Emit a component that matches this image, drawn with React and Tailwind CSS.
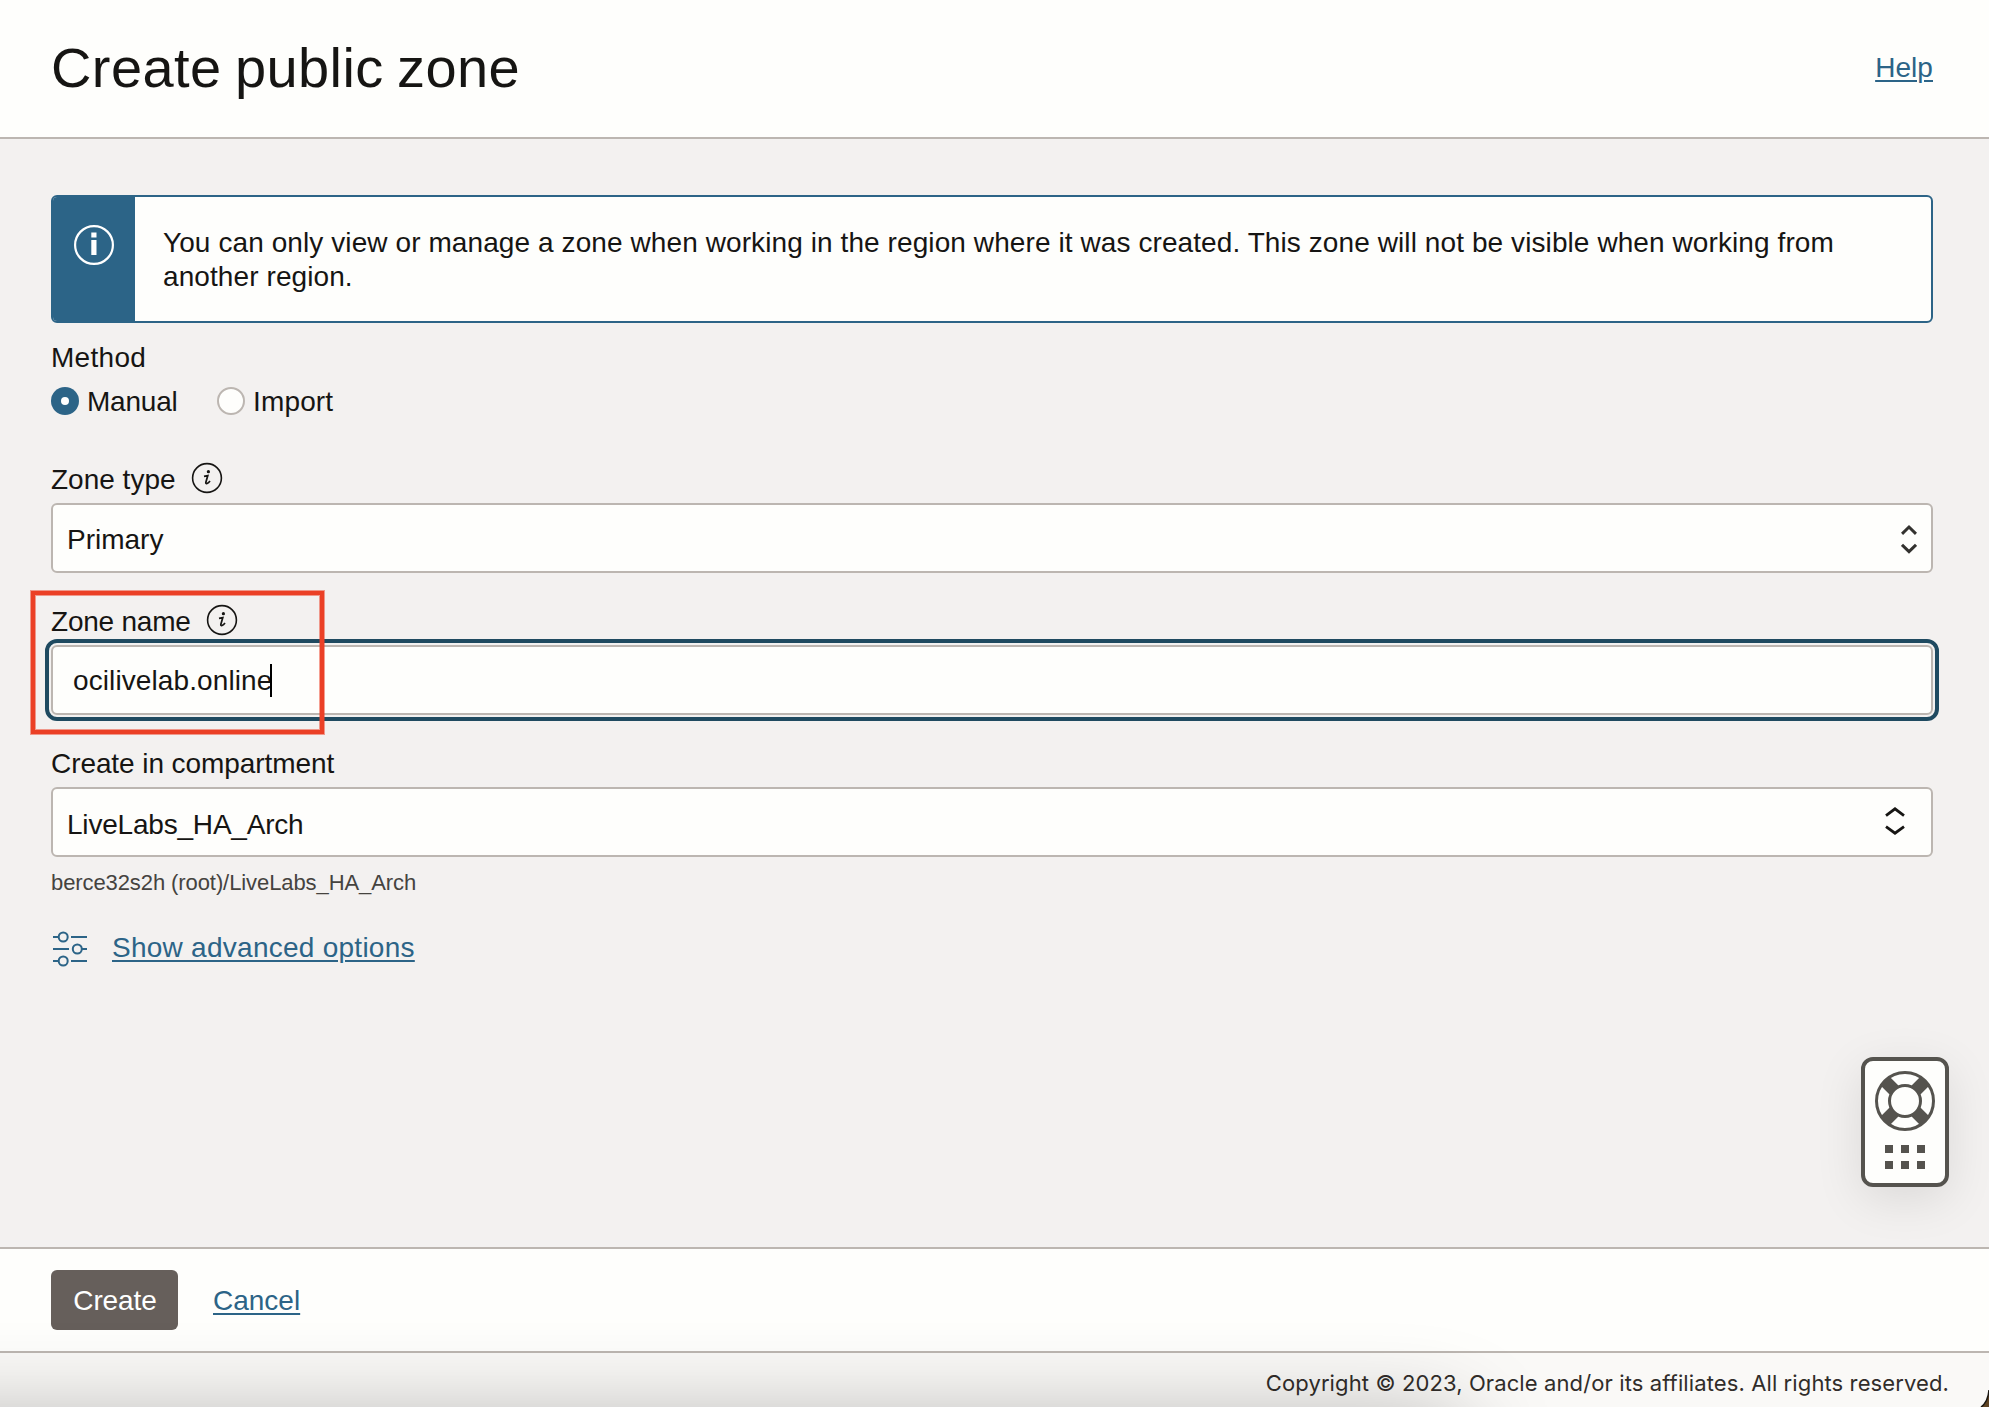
import React from "react";

function InfoCircle() {
  return (
    <svg width="32" height="32" viewBox="0 0 32 32" fill="none" className="shrink-0">
      <circle cx="16" cy="16" r="14.4" stroke="#161513" strokeWidth="1.6" />
      <circle cx="17.4" cy="9.7" r="1.6" fill="#161513" />
      <path d="M13 14.3 L16.8 13.6 L14.8 20.4 Q14.6 22 16 21.5 Q17.6 20.8 19 19" stroke="#161513" strokeWidth="1.7" />
    </svg>
  );
}

function Label({ children, info, className }) {
  return (
    <div className={"flex h-[34px] items-center leading-[34px] " + (className || "")}>
      <span>{children}</span>
      {info && (
        <span className="-mt-1 ml-[15px]">
          <InfoCircle />
        </span>
      )}
    </div>
  );
}

const box =
  "flex h-[70px] items-center rounded-[6px] border-2 border-[#bcb6b1] bg-[#fefefc] leading-[34px]";

function SupportWidget() {
  return (
    <div className="absolute top-[1057px] left-[1861px] flex h-[130px] w-[88px] flex-col items-center rounded-[12px] border-4 border-[#55534e] bg-[#fefefc] pt-[10px] shadow-[0_12px_48px_rgba(0,0,0,0.10)]">
      <svg width="60" height="60" viewBox="0 0 60 60" fill="none">
        <circle cx="30" cy="30" r="28.5" stroke="#55534e" strokeWidth="3" />
        <circle cx="30" cy="30" r="15.5" stroke="#55534e" strokeWidth="3" />
        <g stroke="#55534e" strokeWidth="12.5">
          <path d="M10.5 10.5 L19 19" />
          <path d="M49.5 10.5 L41 19" />
          <path d="M10.5 49.5 L19 41" />
          <path d="M49.5 49.5 L41 41" />
        </g>
      </svg>
      <div className="mt-[14px] grid grid-cols-3 gap-2">
        {[0, 1, 2, 3, 4, 5].map((n) => (
          <span key={n} className="size-2 bg-[#55534e]" />
        ))}
      </div>
    </div>
  );
}

export default function App() {
  return (
    <div className="relative flex h-[1407px] w-[1989px] flex-col overflow-hidden bg-[#f3f1f0] font-['Liberation_Sans',Arial,sans-serif] text-[28px] text-[#161513]">
      <header className="flex h-[139px] shrink-0 items-start justify-between border-b-2 border-[#bcb6b1] bg-[#fefefc] pr-[56px] pl-[51px]">
        <h1 className="mt-[36px] text-[56px] leading-[64px] tracking-[0.4px] [word-spacing:-2.5px]">Create public zone</h1>
        <a className="mt-[51px] leading-[34px] tracking-[0.07px] text-[#2c6487] underline decoration-2 underline-offset-[3px]">Help</a>
      </header>

      <main className="flex-1 pr-[56px] pl-[51px]">
        <div className="mt-[56px] flex h-[128px] overflow-hidden rounded-[6px] border-2 border-[#2c6487] bg-[#fefefc]">
          <div className="flex w-[82px] shrink-0 justify-center bg-[#2c6487] pt-7">
            <svg width="40" height="40" viewBox="0 0 40 40" fill="none">
              <circle cx="20" cy="20" r="18.9" stroke="#fff" strokeWidth="2.2" />
              <path d="M17.3 7.5h5.2v5h-5.2z M17.3 15h5.2v15h-5.2z" fill="#fff" />
            </svg>
          </div>
          <p className="pt-[29px] pl-7 leading-[34px] tracking-[0.09px] whitespace-nowrap">
            You can only view or manage a zone when working in the region where it was created. This zone will not be visible when working from
            <br />
            another region.
          </p>
        </div>

        <Label className="mt-[18px] tracking-[0.3px]">Method</Label>
        <div className="mt-[9px] flex h-[34px] items-center leading-[34px]">
          <span className="flex size-7 items-center justify-center rounded-full bg-[#2c6487]">
            <span className="size-2 rounded-full bg-white" />
          </span>
          <span className="ml-2 w-[130px] pt-0.5 tracking-[-0.2px]">Manual</span>
          <span className="size-7 rounded-full border-2 border-[#bcb6b1] bg-[#fefefc]" />
          <span className="ml-2 pt-0.5 tracking-[0.15px]">Import</span>
        </div>

        <Label info className="mt-[45px]">Zone type</Label>
        <div className={box + " mt-[6px] justify-between pr-[14px] pl-[14px]"}>
          <span className="pt-[3px]">Primary</span>
          <svg width="16" height="30" viewBox="0 0 16 30" fill="none" stroke="#33322f" strokeWidth="3" className="mt-px">
            <path d="M1 9.8 L8 3 L15 9.8 M1 20.8 L8 27.6 L15 20.8" />
          </svg>
        </div>

        <Label info className="mt-[32px] tracking-[-0.22px]">Zone name</Label>
        <div className={box + " mt-[6px] pl-5 outline-4 outline-offset-2 outline-[#1f4a60]"}>
          <span className="pt-0.5 tracking-[0.1px]">ocilivelab.online</span>
          <span className="-ml-0.5 h-[33px] w-0.5 bg-black" />
        </div>

        <Label className="mt-[32px] tracking-[-0.08px]">Create in compartment</Label>
        <div className={box + " mt-[6px] justify-between pr-[26px] pl-[14px]"}>
          <span className="pt-[6px] tracking-[-0.2px]">LiveLabs_HA_Arch</span>
          <svg width="20" height="28" viewBox="0 0 20 28" fill="none" stroke="#161513" strokeWidth="2.8" className="-mt-0.5">
            <path d="M1 8.6 L10 1.8 L19 8.6 M1 19.6 L10 26.2 L19 19.6" />
          </svg>
        </div>
        <div className="mt-[12px] text-[22px] leading-[28px] tracking-[-0.09px] text-[#45433f]">berce32s2h (root)/LiveLabs_HA_Arch</div>

        <div className="mt-[33px] flex h-[34px] items-center leading-[34px] text-[#2c6487]">
          <svg width="38" height="36" viewBox="0 0 38 36" fill="none" stroke="#2c6487" strokeWidth="2" className="mt-1">
            <circle cx="12.2" cy="6" r="4.5" />
            <circle cx="26.3" cy="18" r="4.5" />
            <circle cx="12.2" cy="30" r="4.5" />
            <path d="M2 6h5.5 M20 6h16 M2 18h16 M31 18h5 M2 30h5.5 M20 30h16" />
          </svg>
          <a className="ml-[23px] pt-0.5 tracking-[0.26px] underline decoration-2 underline-offset-[3px]">Show advanced options</a>
        </div>
      </main>

      <div className="flex h-[106px] shrink-0 items-center border-y-2 border-[#bcb6b1] bg-[#fefefc] pl-[51px]">
        <button className="h-[60px] w-[127px] rounded-[6px] bg-[#665f5b] pt-0.5 pl-px leading-[34px] tracking-[-0.1px] text-white">Create</button>
        <a className="ml-[35px] pt-0.5 text-[#2c6487] underline decoration-2 underline-offset-[3px]">Cancel</a>
      </div>

      <footer className="flex h-[54px] shrink-0 items-start justify-end bg-[#faf9f7] pt-[15px] pr-[40px] font-['Inter',sans-serif] text-[22px] leading-[30px] tracking-[0.11px] text-[#312d2a]">
        <span>Copyright © 2023, Oracle and/or its affiliates. All rights reserved.</span>
      </footer>

      <SupportWidget />

      <div className="pointer-events-none absolute top-[591px] left-[31px] h-[143px] w-[293px] border-4 border-[#eb4026] shadow-[0_0_0_1px_rgba(235,64,38,0.5),inset_0_0_0_1px_rgba(235,64,38,0.5)]" />
      <div className="pointer-events-none absolute top-[1417px] -left-[200px] h-[200px] w-[1665px] rounded-[20px] shadow-[0_0_90px_rgba(0,0,0,0.28)]" />
      <svg className="pointer-events-none absolute top-[1387px] left-[1969px]" width="20" height="20" viewBox="0 0 20 20">
        <path d="M20 3 Q19 15 12 20 H20 Z" fill="#5e4322" />
        <path d="M20 3 Q19 15 12 20" stroke="#1a1712" strokeWidth="1.5" fill="none" />
      </svg>
    </div>
  );
}
